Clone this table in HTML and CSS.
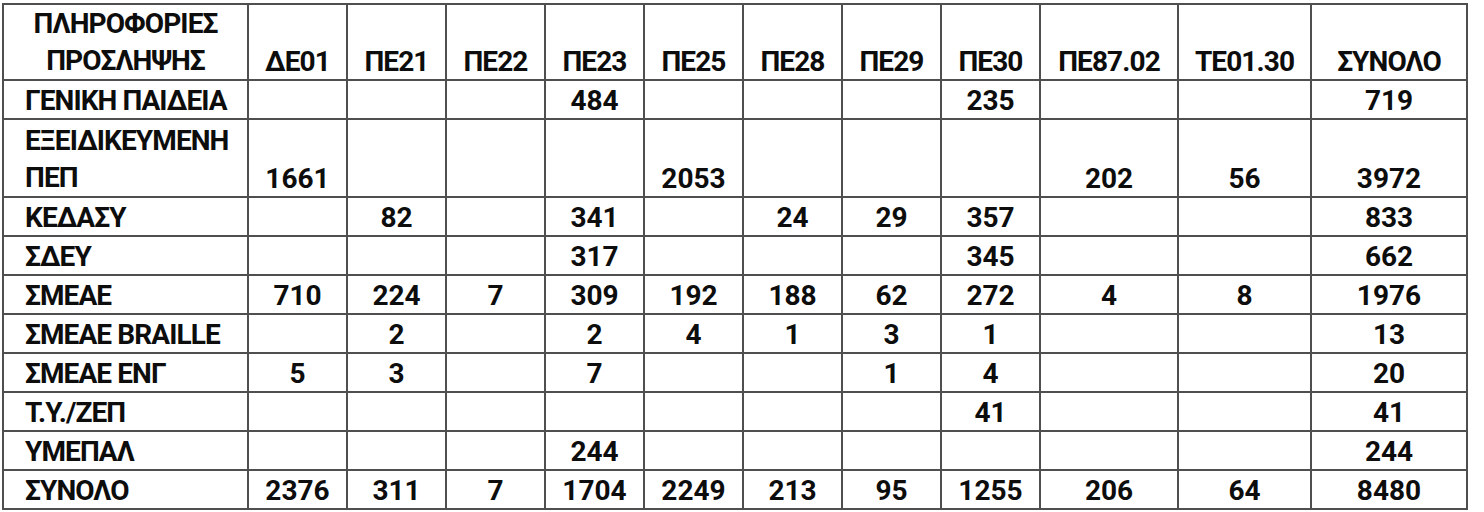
FILE: index.html
```html
<!DOCTYPE html>
<html lang="el">
<head>
<meta charset="utf-8">
<title>Πληροφορίες πρόσληψης</title>
<link rel="stylesheet" href="styles.css">
</head>
<body>
<table class="grid">
  <colgroup>
    <col class="c-name">
    <col class="c-n">
    <col class="c-n">
    <col class="c-n">
    <col class="c-n">
    <col class="c-n">
    <col class="c-n">
    <col class="c-n">
    <col class="c-n">
    <col class="c-wide">
    <col class="c-mid">
    <col class="c-total">
  </colgroup>
  <thead>
    <tr class="head">
      <th class="title">ΠΛΗΡΟΦΟΡΙΕΣ<br>ΠΡΟΣΛΗΨΗΣ</th>
      <th>ΔΕ01</th><th>ΠΕ21</th><th>ΠΕ22</th><th>ΠΕ23</th><th>ΠΕ25</th><th>ΠΕ28</th><th>ΠΕ29</th><th>ΠΕ30</th><th>ΠΕ87.02</th><th>ΤΕ01.30</th><th>ΣΥΝΟΛΟ</th>
    </tr>
  </thead>
  <tbody>
    <tr><td class="name">ΓΕΝΙΚΗ ΠΑΙΔΕΙΑ</td><td></td><td></td><td></td><td>484</td><td></td><td></td><td></td><td>235</td><td></td><td></td><td>719</td></tr>
    <tr class="tall"><td class="name">ΕΞΕΙΔΙΚΕΥΜΕΝΗ<br>ΠΕΠ</td><td>1661</td><td></td><td></td><td></td><td>2053</td><td></td><td></td><td></td><td>202</td><td>56</td><td>3972</td></tr>
    <tr><td class="name">ΚΕΔΑΣΥ</td><td></td><td>82</td><td></td><td>341</td><td></td><td>24</td><td>29</td><td>357</td><td></td><td></td><td>833</td></tr>
    <tr><td class="name">ΣΔΕΥ</td><td></td><td></td><td></td><td>317</td><td></td><td></td><td></td><td>345</td><td></td><td></td><td>662</td></tr>
    <tr><td class="name">ΣΜΕΑΕ</td><td>710</td><td>224</td><td>7</td><td>309</td><td>192</td><td>188</td><td>62</td><td>272</td><td>4</td><td>8</td><td>1976</td></tr>
    <tr><td class="name">ΣΜΕΑΕ BRAILLE</td><td></td><td>2</td><td></td><td>2</td><td>4</td><td>1</td><td>3</td><td>1</td><td></td><td></td><td>13</td></tr>
    <tr><td class="name">ΣΜΕΑΕ ΕΝΓ</td><td>5</td><td>3</td><td></td><td>7</td><td></td><td></td><td>1</td><td>4</td><td></td><td></td><td>20</td></tr>
    <tr><td class="name">Τ.Υ./ΖΕΠ</td><td></td><td></td><td></td><td></td><td></td><td></td><td></td><td>41</td><td></td><td></td><td>41</td></tr>
    <tr><td class="name">ΥΜΕΠΑΛ</td><td></td><td></td><td></td><td>244</td><td></td><td></td><td></td><td></td><td></td><td></td><td>244</td></tr>
    <tr><td class="name">ΣΥΝΟΛΟ</td><td>2376</td><td>311</td><td>7</td><td>1704</td><td>2249</td><td>213</td><td>95</td><td>1255</td><td>206</td><td>64</td><td>8480</td></tr>
  </tbody>
</table>
</body>
</html>
```

FILE: styles.css
```css
html, body {
  margin: 0;
  padding: 0;
  background: #ffffff;
}

body {
  padding: 3px 0 0 2px;
  font-family: Roboto, "Noto Sans", "DejaVu Sans", sans-serif;
  font-weight: 700;
  font-size: 28px;
  color: #0d0d0d;
}

.grid {
  border-collapse: collapse;
  table-layout: fixed;
  width: 1463px;
}

.c-name { width: 245px; }
.c-n { width: 99px; }
.c-wide { width: 138px; }
.c-mid { width: 133px; }
.c-total { width: 156px; }

.grid th,
.grid td {
  border: 2px solid #4f4f4f;
  padding: 0;
  text-align: center;
  vertical-align: bottom;
  line-height: 35px;
  height: 37px;
  font-weight: 700;
  white-space: nowrap;
  overflow: hidden;
}

.grid .head th {
  height: 74px;
  letter-spacing: -0.9px;
}

.grid th.title {
  line-height: 37px;
}

.grid .tall td {
  height: 76px;
}

.grid td.name {
  text-align: left;
  padding-left: 21px;
  letter-spacing: -0.9px;
}

.grid .tall td.name {
  line-height: 37px;
}
```
